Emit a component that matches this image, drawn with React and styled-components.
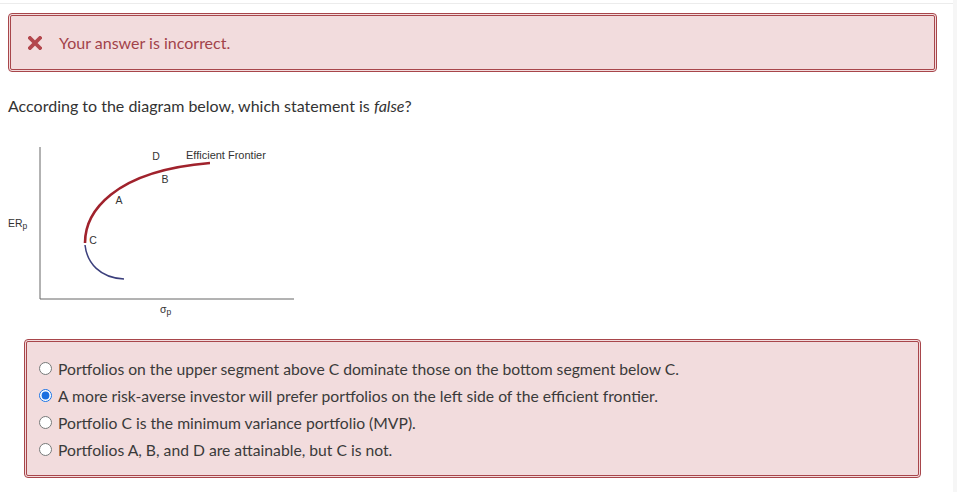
import React from "react";
import styled, { createGlobalStyle } from "styled-components";

const Global = createGlobalStyle`
  html, body { margin: 0; padding: 0; background: #fff; }
  body { font-family: Lato, "Open Sans", Arial, sans-serif; color: #333; }
`;

const Shell = styled.div`
  display: flex;
  min-height: 492px;
`;

const Main = styled.main`
  width: 953px;
  padding-top: 3px;
  box-sizing: border-box;
`;

const Side = styled.div`
  flex: 1;
  background: #f6f6f6;
`;

const Content = styled.div`
  border-top: 1px solid #ececec;
  padding: 9px 16px 0 8px;
`;

const Alert = styled.div`
  box-sizing: border-box;
  height: 59px;
  border: 3px double #a8464b;
  border-radius: 4px;
  background: #f2dcdd;
  display: flex;
  align-items: center;
  gap: 17px;
  padding-left: 17px;
  color: #a2434a;
  font-size: 16px;
`;

const Question = styled.p`
  margin: 22px 0 0;
  font-size: 16px;
  line-height: 24px;
  color: #333;
  em { font-style: italic; }
`;

const Diagram = styled.svg`
  display: block;
  margin-top: 21px;
  font-family: "Liberation Sans", Arial, sans-serif;
`;

const Choices = styled.div`
  box-sizing: border-box;
  margin: 20px 0 0 16px;
  width: 897px;
  height: 139px;
  border: 3px double #a8464b;
  border-radius: 4px;
  background: #f2dcdd;
  padding: 13px 0 0 12px;
  display: flex;
  flex-direction: column;
`;

const Option = styled.label`
  display: flex;
  align-items: center;
  height: 27px;
  font-size: 15.7px;
  color: #3a3a3a;
  gap: 6px;
`;

const Radio = styled.input`
  margin: 0;
  width: 13px;
  height: 13px;
  accent-color: #1a6fe0;
`;

const options = [
  "Portfolios on the upper segment above C dominate those on the bottom segment below C.",
  "A more risk-averse investor will prefer portfolios on the left side of the efficient frontier.",
  "Portfolio C is the minimum variance portfolio (MVP).",
  "Portfolios A, B, and D are attainable, but C is not.",
];

function CrossIcon() {
  return (
    <svg width="14" height="14" viewBox="0 0 14 14">
      <path d="M2 2 L12 12 M12 2 L2 12" stroke="#b3474d" strokeWidth="3.8" strokeLinecap="square" />
    </svg>
  );
}

export default function App() {
  return (
    <>
      <Global />
      <Shell>
        <Main>
          <Content>
            <Alert>
              <CrossIcon />
              <span>Your answer is incorrect.</span>
            </Alert>
            <Question>
              According to the diagram below, which statement is <em>false</em>?
            </Question>
            <Diagram width="290" height="180" viewBox="0 0 290 180">
              <line x1="32" y1="8" x2="32" y2="160" stroke="#666" strokeWidth="1" />
              <line x1="32" y1="160" x2="286" y2="160" stroke="#666" strokeWidth="1" />
              <path d="M77,104 C77,74 104,32 202,24" fill="none" stroke="#a0222c" strokeWidth="2.6" />
              <path d="M77,106 C79,124 92,139 116,140" fill="none" stroke="#3b3f7c" strokeWidth="1.5" />
              <g fill="#333" fontSize="10.5">
                <text x="148" y="21" textAnchor="middle">D</text>
                <text x="178" y="20" fontSize="11">Efficient Frontier</text>
                <text x="157" y="44" textAnchor="middle">B</text>
                <text x="111" y="65" textAnchor="middle">A</text>
                <text x="85" y="105" textAnchor="middle">C</text>
                <text x="0" y="88">ER<tspan fontSize="8.5" dy="2">p</tspan></text>
                <text x="152" y="174">σ<tspan fontSize="8.5" dy="2">p</tspan></text>
              </g>
            </Diagram>
            <Choices>
              {options.map((o, i) => (
                <Option key={i}>
                  <Radio type="radio" name="q" defaultChecked={i === 1} />
                  {o}
                </Option>
              ))}
            </Choices>
          </Content>
        </Main>
        <Side />
      </Shell>
    </>
  );
}
